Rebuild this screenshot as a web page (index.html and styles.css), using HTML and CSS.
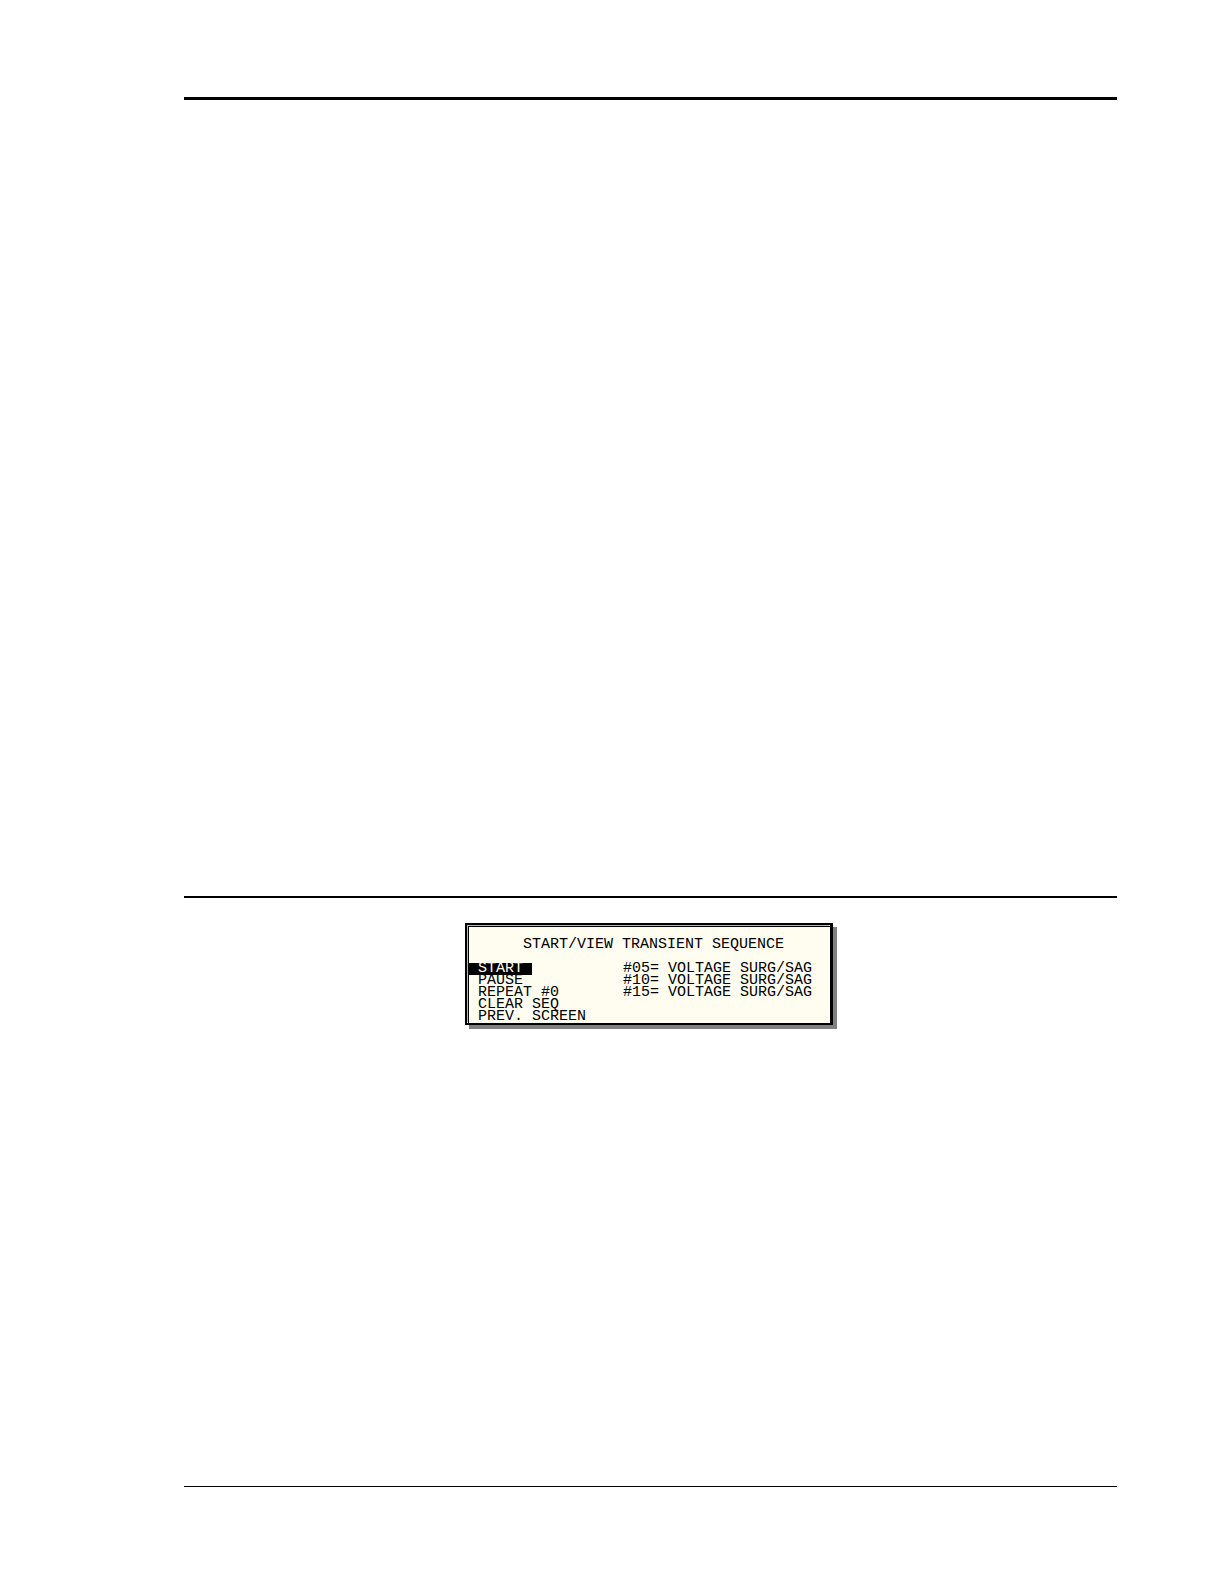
FILE: index.html
```html
<!DOCTYPE html>
<html lang="en">
    <head>
        <meta charset="UTF-8">
        <meta name="viewport" content="width=device-width, initial-scale=1.0">
        <title>Start/View Transient Sequence</title>
        <link rel="stylesheet" href="styles.css">
    </head>
    <body>
        <main class="page">
            <section class="upper"></section>
            <section class="lower">
                <div class="screen">
                    <div class="screen-inner">
                        <h1 class="screen-title">START/VIEW TRANSIENT SEQUENCE</h1>
                        <div class="screen-body">
                            <div class="menu">
                                <button type="button" class="menu-item selected">START</button>
                                <button type="button" class="menu-item">PAUSE</button>
                                <button type="button" class="menu-item">REPEAT #0</button>
                                <button type="button" class="menu-item">CLEAR SEQ</button>
                                <button type="button" class="menu-item">PREV. SCREEN</button>
                            </div>
                            <ul class="sequence">
                                <li>#05= VOLTAGE SURG/SAG</li>
                                <li>#10= VOLTAGE SURG/SAG</li>
                                <li>#15= VOLTAGE SURG/SAG</li>
                            </ul>
                        </div>
                    </div>
                </div>
            </section>
        </main>
    </body>
</html>
```
FILE: styles.css
```css
* {
    box-sizing: border-box;
}
body {
    margin: 0;
    background-color: #fff;
}
.page {
    display: grid;
    grid-template-rows: 799fr 591fr;
    min-height: 100vh;
    padding: 97px 107px 97px 184px;
}
.upper {
    border-top: 3px solid #000;
}
.lower {
    display: flex;
    justify-content: center;
    align-items: flex-start;
    padding: 25px 3px 25px 0; /* right side leaves room for the shadow */
    border-top: 2px solid #000;
    border-bottom: 1px solid #000;
}

/* LCD screen */
.screen {
    border: 2px solid #000;
    border-right-width: 3px;
    background-color: #fffcf0;
    box-shadow: 4px 4px 0 #808080;
    font-family: "Liberation Mono", monospace;
    font-size: 15px;
    line-height: 12px;
    color: #000;
}
.screen-inner {
    border-top: 1px solid #000;
    border-left: 1px solid #000;
    padding: 12px 18px 0 0;
    /* grey line between the two black ones */
    margin: 1px 0 0 1px;
    box-shadow: -1px -1px 0 #b8b8b8;
}
.screen-title {
    margin: 0 0 12px 54px;
    font-size: 15px;
    font-weight: normal;
}
.screen-body {
    display: flex;
}
.menu {
    display: flex;
    flex-direction: column;
    align-items: flex-start;
    width: 154px;
}
.menu-item {
    padding: 0 9px;
    border: none;
    background: none;
    font: inherit;
    color: inherit;
    cursor: pointer;
}
.menu-item.selected {
    background-color: #000;
    color: #fffcf0;
}
.sequence {
    margin: 0;
    padding: 0;
    list-style: none;
}
```
